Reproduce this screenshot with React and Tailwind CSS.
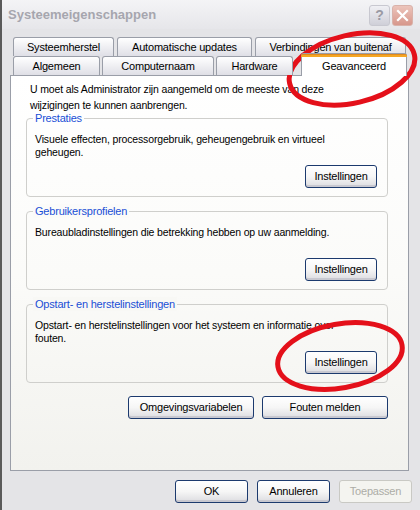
import React from "react";

const font = { fontFamily: '"Liberation Sans", Arial, sans-serif' };

function XPButton({ children, className = "", disabled = false }) {
  return (
    <div
      className={
        "flex items-center justify-center h-[23px] rounded-[3px] border text-[11px] tracking-[-0.2px] " +
        (disabled
          ? "border-[#c9c9c4] text-[#acaca6] bg-[#f4f4f0] "
          : "border-[#1c3a6e] text-black bg-gradient-to-b from-white via-[#f6f6f6] to-[#dcdce0] shadow-[inset_0_-2px_0_#c8c8d0] ") +
        className
      }
    >
      {children}
    </div>
  );
}

function Tab({ children, w, className = "" }) {
  return (
    <div
      className={
        "flex items-center justify-center h-[19px] border border-b-0 border-[#9a9ea8] rounded-t-[3px] bg-gradient-to-b from-white to-[#dfdfe6] text-[11px] tracking-[-0.2px] text-black " +
        className
      }
      style={{ width: w }}
    >
      {children}
    </div>
  );
}

function Group({ title, children, labelBg }) {
  return (
    <div className="relative border border-[#cfcfcc] rounded-[4px] h-[79px] ml-[15px] w-[362px] pl-[8px] pr-[10px] pt-[14px]">
      <span className={"absolute left-[6px] top-[-8px] px-[2px] text-[11px] tracking-[-0.2px] text-[#1a4fd6] leading-[14px] " + labelBg}>{title}</span>
      <div className="h-[26px] w-[312px] text-[10.5px] tracking-[-0.15px] leading-[13px] text-black">{children}</div>
      <div className="flex justify-end mt-[6px]">
        <XPButton className="w-[72px]">Instellingen</XPButton>
      </div>
    </div>
  );
}

export default function App() {
  return (
    <div className="w-[420px] h-[510px] relative overflow-hidden bg-[#e4e4e7] border-l-[2px] border-[#5a5a5a]" style={font}>
      {/* title bar */}
      <div className="h-[29px] flex items-center justify-between pl-[6px] pr-[7px] bg-gradient-to-b from-[#f4f4f6] to-[#e6e6ea]">
        <div className="text-[13px] font-bold text-[#a6a6ae]">
          Systeemeigenschappen
        </div>
        <div className="flex gap-[2px] mt-[2px]">
          <div className="w-[21px] h-[21px] rounded-[3px] border border-[#c8c8d0] bg-gradient-to-b from-[#f0f0f4] to-[#cfcfd8] flex items-center justify-center text-[#9a9aa4] font-bold text-[14px]">?</div>
          <div className="w-[21px] h-[21px] rounded-[3px] border border-[#d9b2aa] bg-gradient-to-b from-[#ecc4bb] to-[#d7978c] flex items-center justify-center">
            <svg width="13" height="13" viewBox="0 0 13 13">
              <path d="M2 2 L11 11 M11 2 L2 11" stroke="white" strokeWidth="2.2" strokeLinecap="square" />
            </svg>
          </div>
        </div>
      </div>

      {/* body */}
      <div className="pl-[8px] pt-[8px]">
        {/* tab row 1 */}
        <div className="flex gap-[3px] pl-[3px]">
          <Tab w={101}>Systeemherstel</Tab>
          <Tab w={135}>Automatische updates</Tab>
          <Tab w={151}>Verbindingen van buitenaf</Tab>
        </div>
        {/* tab row 2 */}
        <div className="flex items-end pl-[3px] h-[19px] relative z-10">
          <Tab w={87} className="mr-[2px]">Algemeen</Tab>
          <Tab w={112} className="mr-[2px]">Computernaam</Tab>
          <Tab w={77} className="mr-[8px]">Hardware</Tab>
          <div className="w-[106px] h-[23px] mb-[-1px] border border-b-0 border-[#9a9ea8] rounded-t-[3px] bg-white flex flex-col">
            <div className="h-[3px] bg-[#f5a623] border-t border-[#e08a1e] rounded-t-[2px] mx-[-1px]"></div>
            <div className="text-[11px] tracking-[-0.2px] text-black text-center leading-[14px] mt-[2px]">Geavanceerd</div>
          </div>
        </div>
        {/* panel */}
        <div className="w-[399px] h-[396px] border border-[#9a9ea8] bg-gradient-to-b from-white via-[#fbfbf9] to-[#f2f2ee] pt-[5px]">
          <div className="pl-[19px] text-[10.5px] tracking-[-0.15px] leading-[16px] text-black w-[340px]">
            U moet als Administrator zijn aangemeld om de meeste van deze wijzigingen te kunnen aanbrengen.
          </div>
          <div className="mt-[5px] flex flex-col gap-[14px]">
            <Group title="Prestaties" labelBg="bg-[#fefefe]">
              Visuele effecten, processorgebruik, geheugengebruik en virtueel geheugen.
            </Group>
            <Group title="Gebruikersprofielen" labelBg="bg-[#fbfbf9]">
              Bureaubladinstellingen die betrekking hebben op uw aanmelding.
            </Group>
            <Group title="Opstart- en herstelinstellingen" labelBg="bg-[#f8f8f5]">
              Opstart- en herstelinstellingen voor het systeem en informatie over fouten.
            </Group>
          </div>
          <div className="flex gap-[8px] ml-[117px] mt-[13px]">
            <XPButton className="w-[126px]">Omgevingsvariabelen</XPButton>
            <XPButton className="w-[126px]">Fouten melden</XPButton>
          </div>
        </div>
        {/* dialog buttons */}
        <div className="flex gap-[9px] ml-[165px] mt-[9px]">
          <XPButton className="w-[73px]">OK</XPButton>
          <XPButton className="w-[73px]">Annuleren</XPButton>
          <XPButton className="w-[73px]" disabled>Toepassen</XPButton>
        </div>
      </div>

      {/* red annotation ellipses */}
      <svg className="absolute left-0 top-0 pointer-events-none" width="420" height="510">
        <ellipse cx="350" cy="69" rx="64" ry="34" transform="rotate(-13 350 69)" fill="none" stroke="#e4101a" strokeWidth="5" />
        <ellipse cx="338" cy="356" rx="63" ry="32" transform="rotate(-10 338 356)" fill="none" stroke="#e4101a" strokeWidth="5" />
      </svg>
    </div>
  );
}
